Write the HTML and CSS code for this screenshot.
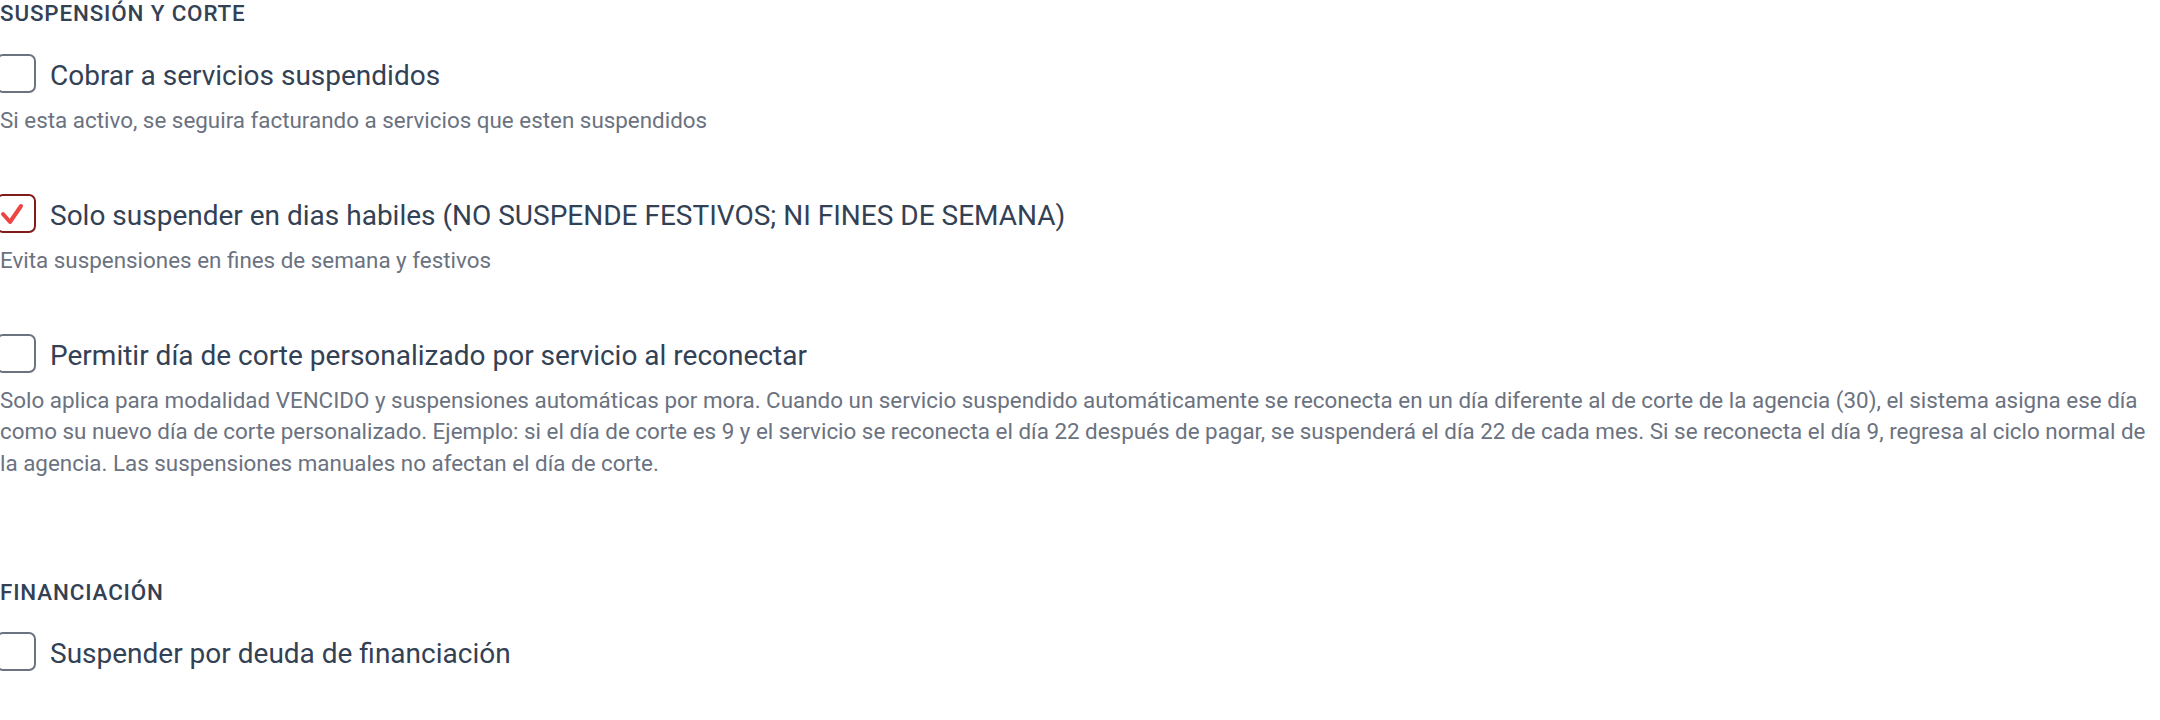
FILE: index.html
```html
<!DOCTYPE html>
<html lang="es">
<head>
    <meta charset="utf-8">
    <title>Suspensión y corte</title>
    <link rel="stylesheet" href="styles.css">
</head>
<body>
    <div class="settings">
        <section class="section">
            <h2 class="section-title">Suspensión y corte</h2>

            <div class="option">
                <label class="option-row">
                    <span class="check"></span>
                    <span class="option-label">Cobrar a servicios suspendidos</span>
                </label>
                <p class="option-help">Si esta activo, se seguira facturando a servicios que esten suspendidos</p>
            </div>

            <div class="option">
                <label class="option-row">
                    <span class="check checked">
                        <svg viewBox="0 0 40 39" width="40" height="39">
                            <polyline points="7,20 14,28 25,12" fill="none" stroke="#ef4444" stroke-width="4" stroke-linecap="round" stroke-linejoin="round"/>
                        </svg>
                    </span>
                    <span class="option-label">Solo suspender en dias habiles (NO SUSPENDE FESTIVOS; NI FINES DE SEMANA)</span>
                </label>
                <p class="option-help">Evita suspensiones en fines de semana y festivos</p>
            </div>

            <div class="option">
                <label class="option-row">
                    <span class="check"></span>
                    <span class="option-label">Permitir día de corte personalizado por servicio al reconectar</span>
                </label>
                <p class="option-help">Solo aplica para modalidad VENCIDO y suspensiones automáticas por mora. Cuando un servicio suspendido automáticamente se reconecta en un día diferente al de corte de la agencia (30), el sistema asigna ese día como su nuevo día de corte personalizado. Ejemplo: si el día de corte es 9 y el servicio se reconecta el día 22 después de pagar, se suspenderá el día 22 de cada mes. Si se reconecta el día 9, regresa al ciclo normal de la agencia. Las suspensiones manuales no afectan el día de corte.</p>
            </div>
        </section>

        <section class="section">
            <h2 class="section-title">Financiación</h2>

            <div class="option">
                <label class="option-row">
                    <span class="check"></span>
                    <span class="option-label">Suspender por deuda de financiación</span>
                </label>
            </div>
        </section>
    </div>
</body>
</html>
```

FILE: styles.css
```css
body {
    margin: 0;
    font-family: Roboto, "Liberation Sans", sans-serif;
    background: #fff;
    overflow: hidden;
}
.settings {
    width: 2160px;
    padding-top: 1px;
    padding-right: 4px;
    box-sizing: border-box;
}
.section + .section {
    margin-top: 100px;
}
.section-title {
    margin: 0 0 28px;
    font-size: 22.4px;
    line-height: 24px;
    font-weight: 500;
    letter-spacing: 0.85px;
    text-transform: uppercase;
    color: #334155;
}
.option + .option {
    margin-top: 56.8px;
}
.option-row {
    display: flex;
    align-items: center;
    gap: 14px;
    height: 40px;
    cursor: pointer;
}
.check {
    flex: none;
    width: 40px;
    height: 39px;
    margin-left: -4px;
    border: 2px solid #6b7280;
    border-radius: 7px;
    box-sizing: border-box;
    position: relative;
}
.check.checked {
    border-color: #7f1d1d;
}
.check svg {
    position: absolute;
    left: -2px;
    top: -2px;
}
.option-label {
    margin-top: 5px;
    font-size: 28px;
    line-height: 40px;
    color: #334155;
}
.option-help {
    margin: 11.5px 0 0;
    font-size: 22.4px;
    line-height: 31.75px;
    color: #6b7280;
}
```
